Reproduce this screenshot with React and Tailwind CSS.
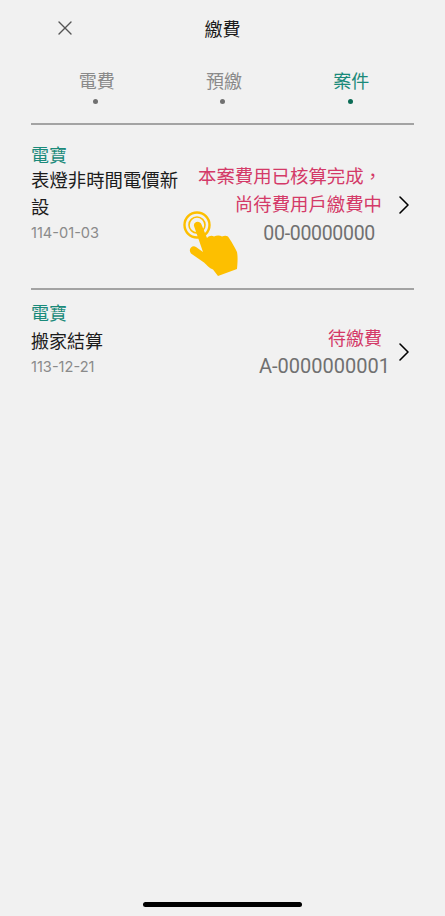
import { X, ChevronRight } from "lucide-react";

const cjk = { fontFamily: '"Noto Sans CJK TC", "Noto Sans", sans-serif' };
const dateFont = { fontFamily: 'Inter, sans-serif' };
const numberFont = { fontFamily: 'Roboto, sans-serif' };

const tabs = [
  { title: "電費", active: false },
  { title: "預繳", active: false },
  { title: "案件", active: true },
];

// tap gesture drawn by hand, the package icons have no filled version with rings
const TapHand = () => (
  <svg viewBox="0 0 56 68" className="absolute left-[152px] top-[85px] w-[56px] h-[68px]">
    <circle cx="14" cy="15" r="12.5" fill="none" stroke="#fdbf00" strokeWidth="2.4" />
    <circle cx="14" cy="15" r="8" fill="none" stroke="#fdbf00" strokeWidth="1.6" />
    <path
      d="M11 16 C10 11.500 17 10 18.500 14.500 L24 28 C26 25.500 29 25 31 26.500 C33.500 25 37 25 39 26.500 C42 25 45 25.500 46 28 C49.500 33 52 38 54 42 C55 47 54.500 54 54 59 L35 66 L30 59.500 C26 58 24 55 21 52.500 L8 43.500 C4.500 39 9.500 34.500 13 37 L20 42 Z"
      fill="#fdbf00"
    />
  </svg>
);

const CaseRow = ({ title, date, status, number, numberClass, rowClass, chevronClass, children }) => (
  <div className={`relative flex ${rowClass}`}>
    <div className="w-[150px] shrink-0">
      <div className="text-[18px] leading-[24px] text-[#1a8a7a]">電寶</div>
      {title}
      <div className="text-[14.6px] leading-[20px] text-[#8a8a8a] mt-[3px]" style={dateFont}>
        {date}
      </div>
    </div>
    <div className="flex-1 flex flex-col items-end pr-[32px]">
      {status}
      <div className={`text-[#707070] whitespace-nowrap ${numberClass}`} style={numberFont}>
        {number}
      </div>
    </div>
    <ChevronRight size={32} strokeWidth={1.2} className={`absolute right-[-6px] text-black ${chevronClass}`} />
    {children}
  </div>
);

export default function App() {
  return (
    <div className="relative w-[445px] h-[916px] bg-[#f1f1f1] overflow-hidden" style={cjk}>
      <div className="relative flex items-center justify-center h-[28px] mt-[14px]">
        <X size={24} strokeWidth={1.4} className="absolute left-[53px] top-[2px] text-[#555555]" />
        <span className="text-[18px] leading-[28px] text-[#1c1c1c]">繳費</span>
      </div>

      <div className="px-[31px]">
        <div className="grid grid-cols-3 mt-[24px] h-[43px] pl-[1px]">
          {tabs.map((tab) => (
            <div key={tab.title} className="flex flex-col items-center">
              <span className={`ml-[2px] text-[18px] leading-[28px] ${tab.active ? "text-[#1a8a7a]" : "text-[#8a8a8a]"}`}>
                {tab.title}
              </span>
              <span className={`mt-[5px] w-[5px] h-[5px] rounded-full ${tab.active ? "bg-[#0b6b55]" : "bg-[#707070]"}`} />
            </div>
          ))}
        </div>
        <div className="h-[2px] mt-[14px] bg-[#a3a3a3]" />

        <CaseRow
          rowClass="h-[163px] pt-[17px]"
          chevronClass="top-[64px]"
          title={<div className="text-[18.4px] leading-[27px] text-[#1c1c1c] mb-[1px]">表燈非時間電價新設</div>}
          date="114-01-03"
          numberClass="text-[19.5px] leading-[24px] mt-[5px] mr-[7px] tracking-[-0.3px]"
          number="00-00000000"
          status={
            <div className="text-[18.4px] leading-[28px] text-[#d43a68] text-right mt-[19px] whitespace-nowrap">
              <div>本案費用已核算完成，</div>
              <div>尚待費用戶繳費中</div>
            </div>
          }
        >
          <TapHand />
        </CaseRow>
        <div className="h-[2px] bg-[#a3a3a3]" />

        <CaseRow
          rowClass="h-[92px] pt-[10px]"
          chevronClass="top-[46px]"
          title={<div className="text-[18px] leading-[28px] text-[#1c1c1c] mt-[2px]">搬家結算</div>}
          date="113-12-21"
          numberClass="text-[20px] leading-[24px] mt-[3px] mr-[-8px]"
          number="A-0000000001"
          status={<div className="text-[18px] leading-[28px] text-[#d43a68] mt-[23px]">待繳費</div>}
        />
      </div>

      <div className="absolute left-[143px] top-[902px] w-[159px] h-[5px] rounded-full bg-black" />
    </div>
  );
}
